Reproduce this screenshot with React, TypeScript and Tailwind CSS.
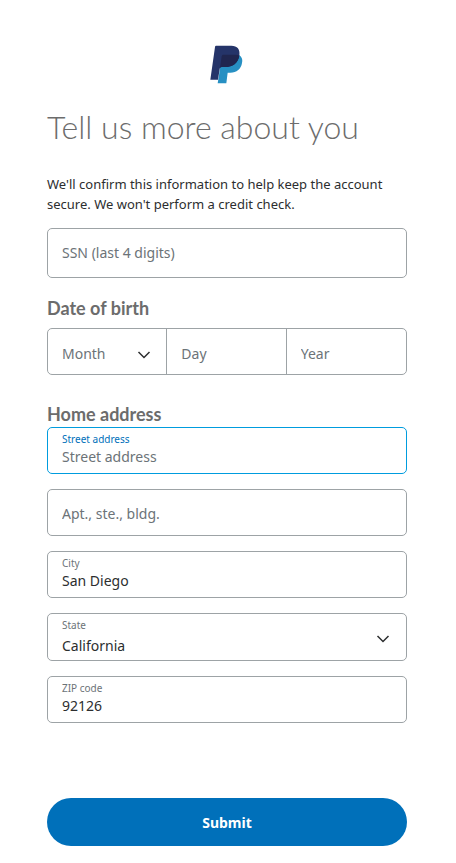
import React, { useState } from 'react';

type FieldProps = {
    id: string;
    label: string;
    value: string;
    onChange: (value: string) => void;
    active?: boolean;
};

const MONTHS = [
    'January', 'February', 'March', 'April', 'May', 'June',
    'July', 'August', 'September', 'October', 'November', 'December',
];

const STATES = ['Arizona', 'California', 'Nevada', 'New York', 'Oregon', 'Texas', 'Washington'];

const PayPalLogo: React.FC = () => (
    <svg viewBox="0 0 99 117" className="h-[39px] w-[33px]" role="img" aria-label="PayPal">
        <path d="M35 29H86C95 34 99 43 96 54C93 72 80 83 61 83H53L49 115H23L27 91Z" fill="#2790c3" />
        <path d="M20 2H64C82 2 91 13 88 31C85 54 68 66 46 66H36C32 66 30 68 29 72L24 104H1L15 6C15 3 17 2 20 2Z" fill="#253469" />
        <path d="M40 29H76C81 29 85 30 88 32C85 54 68 66 46 66H36C33 66 31 67 30 69L35 34C36 31 37 29 40 29Z" fill="#20264f" />
    </svg>
);

const Chevron: React.FC<{ className: string }> = ({ className }) => (
    <svg viewBox="0 0 14 8" fill="none" stroke="currentColor" strokeWidth="1.5" className={`pointer-events-none absolute h-2 w-3.5 text-[#2c2e2f] ${className}`}>
        <path d="M1.5 1L7 6.5L12.5 1" />
    </svg>
);

// Outlined box with a small caption above the value
const LabeledField: React.FC<FieldProps> = ({ id, label, value, onChange, active }) => (
    <div className={`flex h-[47px] flex-col rounded-[5px] border px-3.5 pt-[3px] ${active ? 'border-[#009cde]' : 'border-[#9da3a6]'}`}>
        <label htmlFor={id} className={`text-[10px] leading-4 ${active ? 'text-[#0070ba]' : 'text-[#6c7378]'}`}>{label}</label>
        <input
            id={id}
            value={value}
            placeholder={label}
            onChange={e => onChange(e.target.value)}
            className="w-full text-sm leading-5 outline-none placeholder:text-[#6c7378]"
        />
    </div>
);

const App: React.FC = () => {
    const [month, setMonth] = useState('');
    const [street, setStreet] = useState('');
    const [city, setCity] = useState('San Diego');
    const [state, setState] = useState('California');
    const [zip, setZip] = useState('92126');

    return (
        <main className="bg-white pt-[45px] pr-[49px] pb-4 pl-[47px] font-['Noto_Sans',sans-serif] text-[#2c2e2f]">
            <header className="flex justify-center pr-0.5">
                <PayPalLogo />
            </header>

            <h1 className="mt-[23px] font-['Lato',sans-serif] text-[32px] leading-10 font-light whitespace-nowrap text-[#6c6c6c]">Tell us more about you</h1>
            <p className="mt-[27px] text-[13px] leading-5">
                We'll confirm this information to help keep the account secure. We won't perform a credit check.
            </p>

            <form onSubmit={e => e.preventDefault()}>
                <input
                    aria-label="SSN (last 4 digits)"
                    placeholder="SSN (last 4 digits)"
                    className="mt-3.5 block h-[50px] w-full rounded-[5px] border border-[#9da3a6] px-3.5 pb-0.5 text-sm outline-none placeholder:text-[#6c7378]"
                />

                <fieldset className="mt-[18px]">
                    <legend className="font-['Lato',sans-serif] text-lg leading-6 font-bold text-[#6c6c6c]">Date of birth</legend>
                    <div className="mt-2 grid h-[47px] grid-cols-3 divide-x divide-[#9da3a6] rounded-[5px] border border-[#9da3a6] text-sm">
                        <div className="relative">
                            <select
                                aria-label="Month"
                                value={month}
                                onChange={e => setMonth(e.target.value)}
                                className="h-full w-full appearance-none px-3.5 pt-1 text-[#6c7378] outline-none"
                            >
                                <option value="">Month</option>
                                {MONTHS.map(m => <option key={m} value={m}>{m}</option>)}
                            </select>
                            <Chevron className="top-[22px] right-[15px]" />
                        </div>
                        <input aria-label="Day" placeholder="Day" className="w-full min-w-0 px-3.5 pt-1 outline-none placeholder:text-[#6c7378]" />
                        <input aria-label="Year" placeholder="Year" className="w-full min-w-0 px-3.5 pt-1 outline-none placeholder:text-[#6c7378]" />
                    </div>
                </fieldset>

                <fieldset className="mt-[27px]">
                    <legend className="font-['Lato',sans-serif] text-lg leading-6 font-bold text-[#6c6c6c]">Home address</legend>
                    <div className="mt-px flex flex-col gap-[15px]">
                        <LabeledField id="street" label="Street address" value={street} onChange={setStreet} active />
                        <input
                            aria-label="Apt., ste., bldg."
                            placeholder="Apt., ste., bldg."
                            className="h-[47px] w-full rounded-[5px] border border-[#9da3a6] px-3.5 pt-0.5 text-sm outline-none placeholder:text-[#6c7378]"
                        />
                        <LabeledField id="city" label="City" value={city} onChange={setCity} />
                        <div className="relative flex h-12 flex-col rounded-[5px] border border-[#9da3a6] px-3.5 pt-[3px]">
                            <label htmlFor="state" className="text-[10px] leading-4 text-[#6c7378]">State</label>
                            <select
                                id="state"
                                value={state}
                                onChange={e => setState(e.target.value)}
                                className="w-full flex-1 appearance-none pb-0.5 text-sm outline-none"
                            >
                                {STATES.map(s => <option key={s} value={s}>{s}</option>)}
                            </select>
                            <Chevron className="top-[21px] right-4" />
                        </div>
                        <LabeledField id="zip" label="ZIP code" value={zip} onChange={setZip} />
                    </div>
                </fieldset>

                <button type="submit" className="mt-[75px] h-12 w-full rounded-3xl bg-[#0070ba] pt-0.5 text-sm font-bold text-white">
                    Submit
                </button>
            </form>
        </main>
    );
};

export default App;
